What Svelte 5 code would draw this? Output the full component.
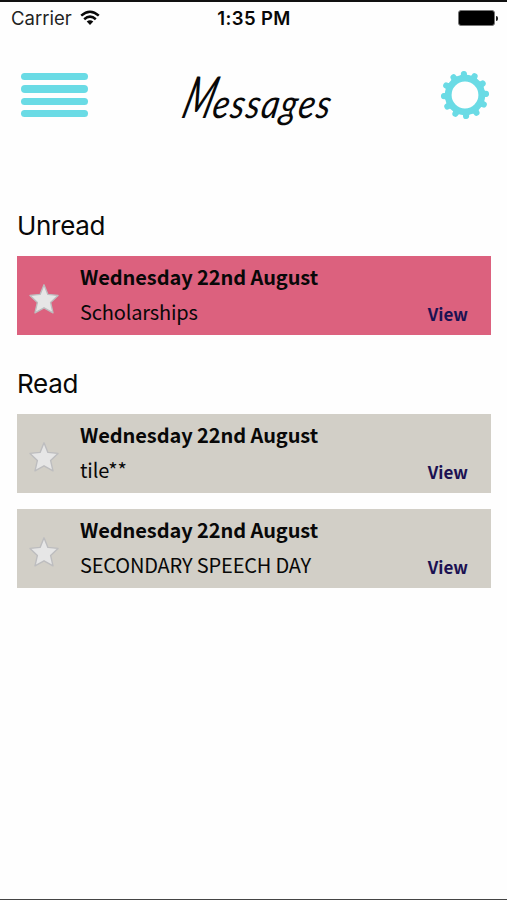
<script>
	const teeth = 12;

	let sections = [
		{
			title: "Unread",
			unread: true,
			messages: [{ date: "Wednesday 22nd August", subject: "Scholarships" }],
		},
		{
			title: "Read",
			unread: false,
			messages: [
				{ date: "Wednesday 22nd August", subject: "tile**" },
				{ date: "Wednesday 22nd August", subject: "SECONDARY SPEECH DAY" },
			],
		},
	];
</script>

<main>
	<div class="status">
		<div class="carrier">
			<span>Carrier</span>
			<svg width="20" height="16" viewBox="0 0 20 16">
				<path d="M1.2 5.6 Q10 -2.2 18.8 5.6" />
				<path d="M4.2 9.2 Q10 4.1 15.8 9.2" />
				<path class="dot" d="M6.7 11.6 Q10 8.9 13.3 11.6 L10 15 Z" />
			</svg>
		</div>
		<div class="time">1:35 PM</div>
		<div class="power">
			<div class="battery"></div>
			<div class="nub"></div>
		</div>
	</div>

	<header>
		<div class="menu">
			<span></span>
			<span></span>
			<span></span>
			<span></span>
		</div>
		<h1><span class="cap">M</span>essages</h1>
		<svg class="gear" width="50" height="50" viewBox="-25 -25 50 50">
			<circle class="ring" r="16.8" />
			{#each Array(teeth) as _, i}
				<g transform="rotate({(i * 360) / teeth - 3})">
					<path d="M-4 -19 L-2.4 -21 H2.4 L4 -19 Z" />
					<circle cy="-21" r="3.1" />
				</g>
			{/each}
		</svg>
	</header>

	{#each sections as section}
		<section>
			<h2>{section.title}</h2>
			{#each section.messages as message}
				<div class="message" class:unread={section.unread}>
					<svg class="star" width="32" height="32" viewBox="0 0 32 32">
						<path
							d="M16 1.8 L19.9 11.4 L30 12.4 L22.6 19.4 L25 29.8 L16 24.8 L7 29.8 L9.4 19.4 L2 12.4 L12.1 11.4 Z" />
					</svg>
					<div class="text">
						<h3>{message.date}</h3>
						<p>{message.subject}</p>
					</div>
					<div class="view">View</div>
				</div>
			{/each}
		</section>
	{/each}
</main>

<style>
	:global(body) {
		background: #fefefe;
	}
	main {
		box-sizing: border-box;
		height: 900px;
		border-top: 2px solid #111;
		border-bottom: 1px solid #444;
		font-family: "Noto Sans CJK SC", "Noto Sans", sans-serif;
		color: #080808;
		overflow: hidden;
	}
	h1,
	h2,
	h3,
	p {
		margin: 0;
	}
	.status {
		display: grid;
		grid-template-columns: 1fr auto 1fr;
		align-items: center;
		height: 32px;
		padding: 0 9px 0 11px;
		font-family: Inter, sans-serif;
		font-size: 18.5px;
	}
	.carrier {
		display: flex;
		align-items: center;
		gap: 8px;
		color: #222;
	}
	.carrier path {
		fill: none;
		stroke: #080808;
		stroke-width: 2.5;
	}
	.carrier .dot {
		fill: #080808;
		stroke: none;
	}
	.time {
		padding-right: 1px;
		font-weight: 600;
		letter-spacing: 0.4px;
	}
	.power {
		display: flex;
		justify-content: flex-end;
		align-items: center;
		gap: 1px;
	}
	.battery {
		box-sizing: border-box;
		width: 37px;
		height: 16px;
		border: 1px solid #777;
		border-radius: 3px;
		background: #000;
	}
	.nub {
		width: 2px;
		height: 5px;
		border-radius: 0 3px 3px 0;
		background: #222;
	}
	header {
		display: flex;
		justify-content: space-between;
		align-items: center;
		height: 122px;
		margin-bottom: 37px;
		padding: 0 17px 0 21px;
	}
	.menu {
		display: flex;
		flex-direction: column;
		gap: 5px;
		width: 67px;
	}
	.menu span {
		height: 7.4px;
		border-radius: 4px;
		background: #6adbe5;
	}
	h1 {
		padding: 8px 16px 0 0;
		font-family: Lato, sans-serif;
		font-style: italic;
		font-weight: 400;
		font-size: 40px;
		letter-spacing: 1.6px;
		line-height: 60px;
		transform: skewX(-10deg) scaleX(0.87);
	}
	.cap {
		display: inline-block;
		margin-right: -12px;
		font-size: 58px;
		transform: skewX(-8deg) scaleX(0.68);
		transform-origin: 30% 75%;
	}
	.gear {
		fill: #6adbe5;
	}
	.gear .ring {
		fill: none;
		stroke: #6adbe5;
		stroke-width: 6.8;
	}
	section {
		padding: 0 16px 0 17px;
	}
	h2 {
		height: 63px;
		font-family: Inter, sans-serif;
		font-weight: 400;
		font-size: 26px;
		letter-spacing: -0.3px;
		line-height: 65px;
	}
	.message {
		display: flex;
		height: 79px;
		margin-bottom: 16px;
		background: #d2cfc7;
	}
	.message.unread {
		background: #dc617e;
	}
	.star {
		margin: 27px 20px 0 11px;
	}
	.star path {
		fill: #e6e6e6;
		stroke: #bdbdbf;
		stroke-width: 1.4;
		stroke-linejoin: round;
	}
	.text {
		flex: 1;
		padding-top: 4px;
	}
	h3 {
		font-weight: 700;
		font-size: 20px;
		letter-spacing: -0.08px;
		line-height: 34px;
	}
	p {
		font-size: 20px;
		letter-spacing: -0.18px;
		line-height: 36px;
	}
	.view {
		align-self: flex-end;
		padding: 0 23px 6px 0;
		font-weight: 700;
		font-size: 17px;
		line-height: 30px;
		color: #1b1152;
	}
</style>
